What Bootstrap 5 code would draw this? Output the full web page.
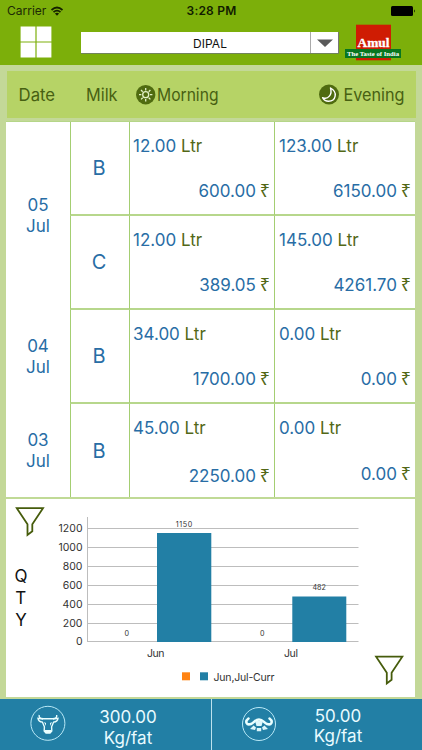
<!DOCTYPE html>
<html lang="en">
<head>
<meta charset="utf-8">
<meta name="viewport" content="width=device-width, initial-scale=1">
<title>Milk collection</title>
<link href="https://cdn.jsdelivr.net/npm/bootstrap@5.3.0/dist/css/bootstrap.min.css" rel="stylesheet">
<style>
body{font-family:Inter,"Liberation Sans",sans-serif;background:#c3d898;width:422px;height:750px;overflow:hidden}
.topbar{height:65px;background:#7caf0a}
.statusbar{height:22px;font-size:12px;line-height:22px;color:#1c2a05;padding:0 6px 0 7px}
.status-side{width:175px}
.clock{font-weight:600;letter-spacing:.2px;color:#111c00}
.toolrow{height:43px}
.menu-icon{margin-left:20px;margin-top:4px}
.brand-logo{margin-left:6px;margin-top:2px}
.picker{width:258px;height:21px;margin-left:29px;margin-top:10px;border-right:1px solid #777;box-shadow:0 1px 0 #71845a;font-size:12px;letter-spacing:.1px;color:#111;line-height:23px}
.picker-name{padding-left:29px}
.picker-arrow{width:28px;border-left:1px solid #aaa}
.heading{height:47px;margin:6px 6px 0 7px;background:#b6d366}
.ledger{display:grid;grid-template-columns:64px 59px 145px 141px;margin:3px 7px 0 6px;height:376px;background:#fff;border-top:1px solid #b5d688;color:#286da5;grid-template-rows:94px 94px 94px 93px;font-size:17px;line-height:20px}
.day{grid-column:1;line-height:20.7px}
.day-span{grid-row:span 2}
.kind,.entry{border-left:1px solid #a4ce72;border-bottom:2px solid #b7d78c}
.kind{font-size:20px;padding-right:2px}
.last-row{border-bottom:0}
.entry{padding:14px 4px 13px 3px}
.evening{padding-left:4px}
.entry.low{padding-bottom:11px}
.amount{height:20px}
.unit{color:#536817}
.rupee{font-family:"Noto Sans","DejaVu Sans",sans-serif;font-size:18px;line-height:1;color:#536817;margin-left:-1px}
.plot{height:200px;margin:0 7px 0 6px;background:#fff;border-top:2px solid #c0da96}
.footbar{height:51px;margin-top:2px;background:#227fa5;color:#e9fbff;font-size:17px;line-height:20px}
.tile{width:211px}
.tile + .tile{border-left:1px solid #bce2ed}
.cow-icon{margin-left:30px;margin-top:6px}
.buffalo-icon{margin-left:29px;margin-top:7px}
.rate{width:90px;margin-left:17px;margin-top:8px;line-height:20.5px}
.rate-tight{margin-left:16px;line-height:19.5px}
svg{display:block;flex-shrink:0}
</style>
<script src="https://cdn.jsdelivr.net/npm/bootstrap@5.3.0/dist/js/bootstrap.bundle.min.js"></script>
</head>
<body class="d-flex flex-column">
<header class="topbar">
  <div class="statusbar d-flex justify-content-between align-items-center">
    <div class="status-side d-flex align-items-center"><span>Carrier</span>
      <svg class="ms-1" width="14" height="11" viewBox="0 0 14 11" fill="none" stroke="#142000" stroke-width="1.7"><path d="M1.5 4Q7-1 12.5 4M3.5 6.2Q7 3 10.5 6.2"/><path d="M4.9 7.5Q7 5.8 9.1 7.5L7 9.8Z" fill="#142000" stroke="none"/></svg>
    </div>
    <span class="clock">3:28 PM</span>
    <div class="status-side d-flex justify-content-end"><svg width="25" height="10" viewBox="0 0 25 10"><rect width="22" height="10" rx="1.5"/><path d="M23 3.2q1.8 1.8 0 3.6z"/></svg></div>
  </div>
  <div class="toolrow d-flex align-items-start">
    <svg class="menu-icon" width="32" height="32" viewBox="0 0 32 32"><path fill="#fff" d="M.6.6h14.8v14.8H.6zM16.6.6h14.8v14.8H16.6zM.6 16.6h14.8v14.8H.6zM16.6 16.6h14.8v14.8H16.6z"/></svg>
    <div class="picker d-flex bg-white">
      <div class="picker-name flex-grow-1 text-center">DIPAL</div>
      <div class="picker-arrow d-flex align-items-center justify-content-center"><svg width="16" height="8" viewBox="0 0 16 8"><path fill="#5a5a5a" d="M0 .5h16L8 8z"/></svg></div>
    </div>
    <svg class="brand-logo" width="56" height="37" viewBox="345 24 56 37"><rect x="356" y="24.7" width="35" height="35.6" fill="#cf1c03"/><rect x="345" y="49" width="56" height="9" fill="#087620"/><text x="357.5" y="46.6" font-family="Liberation Serif,serif" font-weight="700" font-size="13" fill="#fff" stroke="#fff" stroke-width=".3" textLength="32" lengthAdjust="spacingAndGlyphs">Amul</text><text x="347" y="56" font-family="Liberation Serif,serif" font-weight="700" font-size="7" fill="#fff" textLength="52" lengthAdjust="spacingAndGlyphs">The Taste of India</text></svg>
  </div>
</header>

<svg class="heading" width="409" height="47" viewBox="7 71 409 47" fill="#476012" font-size="17">
  <text x="18.6" y="101" textLength="36.5" lengthAdjust="spacingAndGlyphs">Date</text>
  <text x="86" y="101" textLength="31.5" lengthAdjust="spacingAndGlyphs">Milk</text>
  <circle cx="145.7" cy="94.7" r="9.7" fill="#4f6b10"/>
  <g fill="none" stroke="#e4f2c8" stroke-width="1.3"><circle cx="145.7" cy="94.7" r="3"/><path d="M145.7 88v2.4M145.7 99v2.4M139 94.7h2.4M150 94.7h2.4M141 90l1.7 1.7M148.7 97.7l1.7 1.7M141 99.4l1.7-1.7M148.7 91.7l1.7-1.7"/></g>
  <text x="157" y="101" textLength="61.5" lengthAdjust="spacingAndGlyphs">Morning</text>
  <circle cx="329" cy="94.5" r="10" fill="#4f6b10"/>
  <path d="M330.5 88C338 92 336 101 328.5 101.2Q324.5 101.2 322.6 97.6C328 100 332.6 94.5 330.5 88Z" fill="#4f6b10" stroke="#fff" stroke-width="1.4" stroke-linejoin="round"/>
  <text x="343.5" y="101" textLength="61" lengthAdjust="spacingAndGlyphs">Evening</text>
</svg>

<main class="ledger">
  <div class="day day-span d-flex align-items-center justify-content-center text-center">05<br>Jul</div>
  <div class="kind d-flex align-items-center justify-content-center">B</div>
  <div class="entry d-flex flex-column justify-content-between"><div>12.00 <span class="unit">Ltr</span></div><div class="amount text-end">600.00 <span class="rupee">₹</span></div></div>
  <div class="entry evening d-flex flex-column justify-content-between"><div>123.00 <span class="unit">Ltr</span></div><div class="amount text-end">6150.00 <span class="rupee">₹</span></div></div>
  <div class="kind d-flex align-items-center justify-content-center">C</div>
  <div class="entry d-flex flex-column justify-content-between"><div>12.00 <span class="unit">Ltr</span></div><div class="amount text-end">389.05 <span class="rupee">₹</span></div></div>
  <div class="entry evening d-flex flex-column justify-content-between"><div>145.00 <span class="unit">Ltr</span></div><div class="amount text-end">4261.70 <span class="rupee">₹</span></div></div>
  <div class="day d-flex align-items-center justify-content-center text-center">04<br>Jul</div>
  <div class="kind d-flex align-items-center justify-content-center">B</div>
  <div class="entry d-flex flex-column justify-content-between"><div>34.00 <span class="unit">Ltr</span></div><div class="amount text-end">1700.00 <span class="rupee">₹</span></div></div>
  <div class="entry evening d-flex flex-column justify-content-between"><div>0.00 <span class="unit">Ltr</span></div><div class="amount text-end">0.00 <span class="rupee">₹</span></div></div>
  <div class="day d-flex align-items-center justify-content-center text-center">03<br>Jul</div>
  <div class="kind last-row d-flex align-items-center justify-content-center">B</div>
  <div class="entry low last-row d-flex flex-column justify-content-between"><div>45.00 <span class="unit">Ltr</span></div><div class="amount text-end">2250.00 <span class="rupee">₹</span></div></div>
  <div class="entry evening last-row d-flex flex-column justify-content-between"><div>0.00 <span class="unit">Ltr</span></div><div class="amount text-end">0.00 <span class="rupee">₹</span></div></div>
</main>

<section class="plot">
  <svg width="409" height="198" viewBox="6 499 409 198">
    <path d="M88 528.5H358.5M88 547.5H358.5M88 566.5H358.5M88 585.5H358.5M88 604.5H358.5M88 623.5H358.5M88 641.5H358.5M87.5 517V642" stroke="#bdbdbd"/>
    <path d="M157 533h54.3v109H157zM292.3 596.5h54v45.5h-54z" fill="#227fa5"/>
    <g font-size="10.5" fill="#333" text-anchor="end"><text x="82.5" y="532" textLength="24">1200</text><text x="82.5" y="551" textLength="24">1000</text><text x="82.5" y="570">800</text><text x="82.5" y="589">600</text><text x="82.5" y="607.5">400</text><text x="82.5" y="626.5">200</text><text x="82.5" y="645.3">0</text></g>
    <g font-size="7.2" fill="#333" text-anchor="middle"><text x="184" y="527" textLength="16.5">1150</text><text x="126.7" y="636.3">0</text><text x="262.2" y="636.3">0</text><text x="319.2" y="590.3">482</text></g>
    <g font-size="10.5" fill="#333"><text x="147" y="656.5" textLength="17.5">Jun</text><text x="284" y="656.5" textLength="14">Jul</text><text x="213.5" y="680.5" textLength="61">Jun,Jul-Curr</text></g>
    <path fill="#ff8312" d="M182 672.3h8v8h-8z"/><path fill="#227fa5" d="M200 672.3h8v8h-8z"/>
    <g font-size="17" fill="#111"><text x="14.6" y="582">Q</text><text x="15.2" y="604">T</text><text x="15.2" y="626">Y</text></g>
    <g fill="none" stroke="#465c0c" stroke-width="1.8"><path id="funnel" d="M16.8 508.2H43L32.3 524.3V531.3L27.5 535V524.3Z"/><use href="#funnel" x="359.3" y="148.5"/></g>
  </svg>
</section>

<footer class="footbar d-flex">
  <div class="tile d-flex">
    <svg class="cow-icon" width="36" height="36" viewBox="30 705 36 36"><circle cx="47.9" cy="723.3" r="17" fill="none" stroke="#b9e9f7"/><path d="M39.2 715q-.7 3.5 4 3.7h9.5q4.6-.2 4-3.7" fill="none" stroke="#eaffff" stroke-width="1.4"/><path d="M43 719l-5-.6q.5 3.4 4.4 3.7l2 4.7-.2 4.2 1.800 2h4l1.800-2-.2-4.200 2-4.700q3.900-.3 4.400-3.700l-5 .6" fill="none" stroke="#eaffff" stroke-width="1.4"/><path d="M45 730h6v3h-6zM44 722l2 1v3zM52 722l-2 1v3z" fill="#eaffff"/></svg>
    <div class="rate text-center"><div>300.00</div><div>Kg/fat</div></div>
  </div>
  <div class="tile d-flex">
    <svg class="buffalo-icon" width="36" height="36" viewBox="241 706 36 36"><circle cx="259" cy="724" r="16.5" fill="none" stroke="#b9e9f7"/><path d="M248.5 718.5c-4 3-2 7 2.5 5.5 3-1 4-4.5 8-4.5s5 3.5 8 4.5c4.5 1.5 6.5-2.5 2.5-5.5" fill="none" stroke="#eaffff" stroke-width="2.5" stroke-linecap="round"/><path d="M255 721h8l-1.500 5h-5zM250 729l3.500-3.500 2.500 2-1 2.500zM268 729l-3.500-3.500-2.500 2 1 2.500zM256.800 728h4.400v3.200h-4.400z" fill="#dcf6fb"/></svg>
    <div class="rate rate-tight text-center"><div>50.00</div><div>Kg/fat</div></div>
  </div>
</footer>
</body>
</html>
